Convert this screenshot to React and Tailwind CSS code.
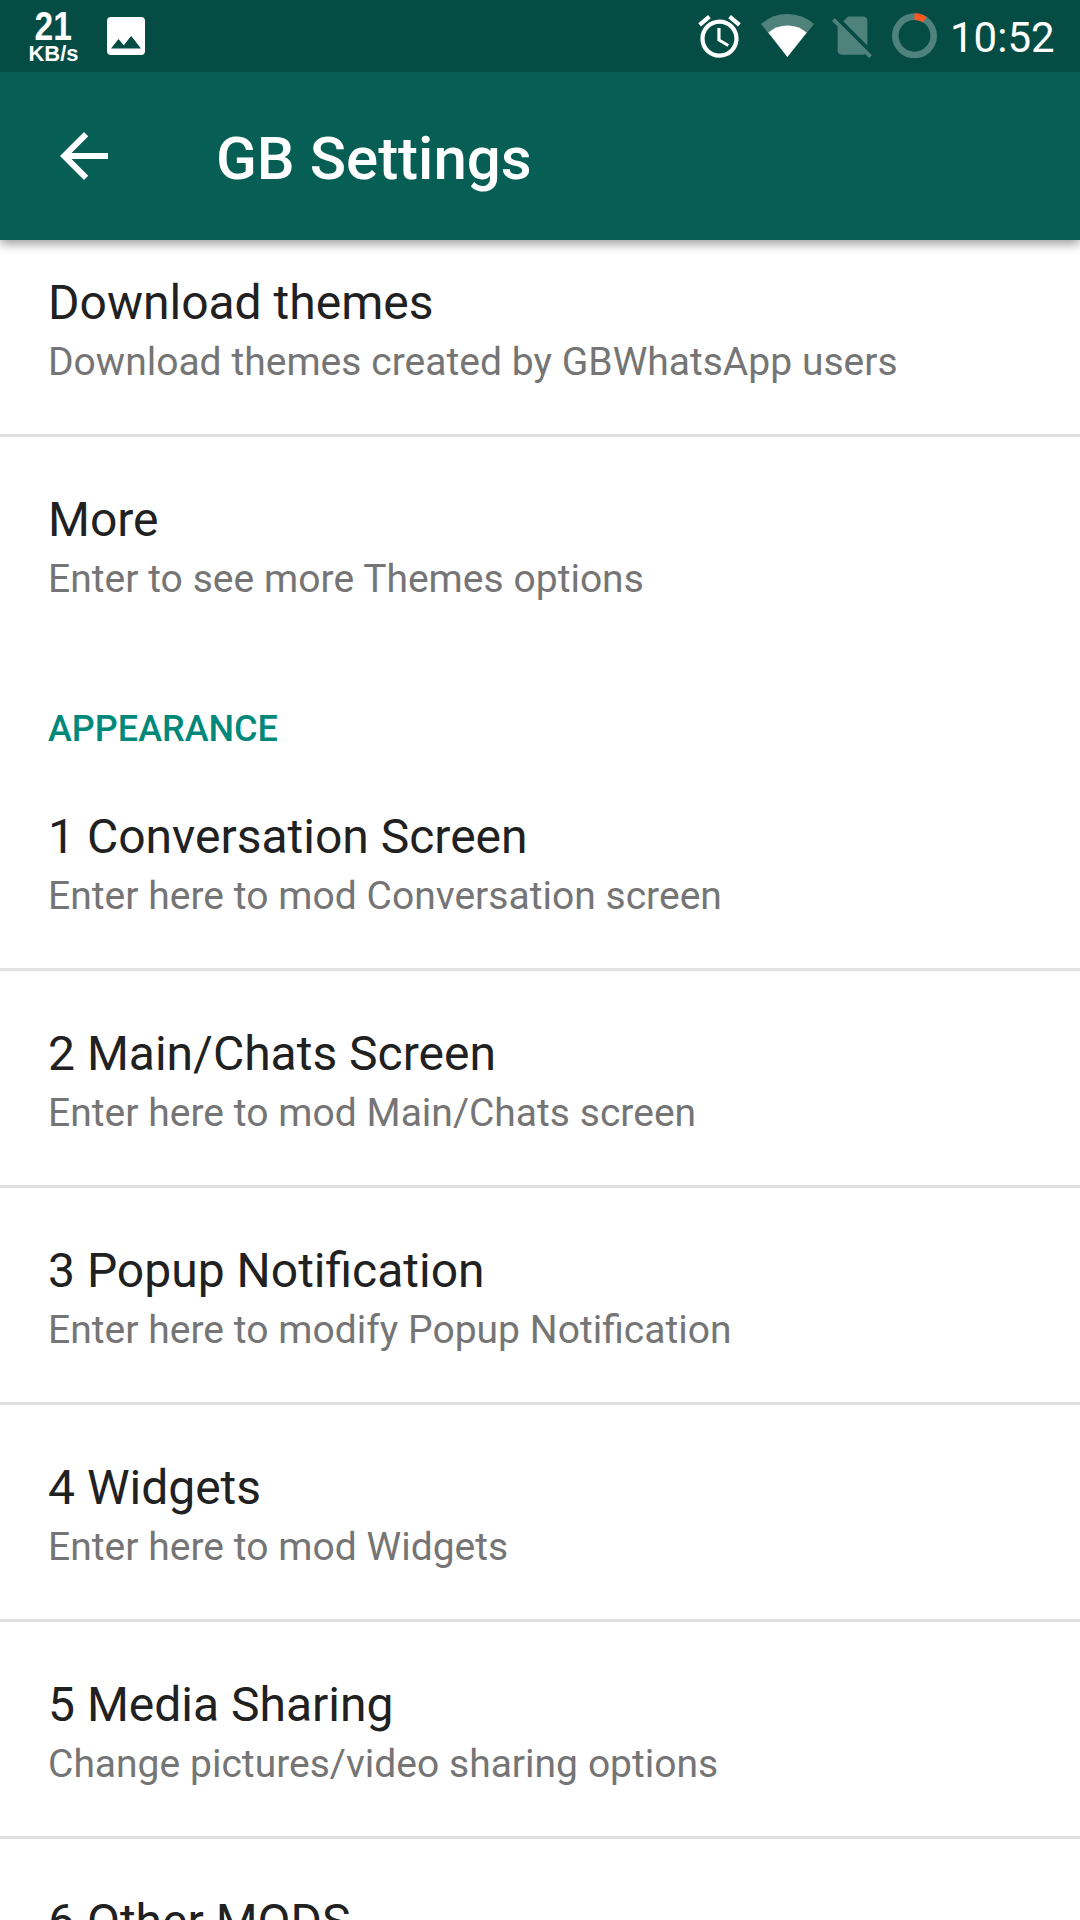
const themes = [
  { title: "Download themes", summary: "Download themes created by GBWhatsApp users" },
  { title: "More", summary: "Enter to see more Themes options" },
];

const appearance = [
  { title: "1 Conversation Screen", summary: "Enter here to mod Conversation screen" },
  { title: "2 Main/Chats Screen", summary: "Enter here to mod Main/Chats screen" },
  { title: "3 Popup Notification", summary: "Enter here to modify Popup Notification" },
  { title: "4 Widgets", summary: "Enter here to mod Widgets" },
  { title: "5 Media Sharing", summary: "Change pictures/video sharing options" },
  { title: "6 Other MODS" },
];

function PhotoIcon() {
  return (
    <svg className="h-[38px] w-[38px]" viewBox="0 0 38 38">
      <path
        fill="#fff"
        fillRule="evenodd"
        d="M4 0h30a4 4 0 0 1 4 4v30a4 4 0 0 1-4 4H4a4 4 0 0 1-4-4V4a4 4 0 0 1 4-4zM4 31.5h30L24.2 19l-7.5 9.3-5.2-6.3z"
      />
    </svg>
  );
}

function AlarmIcon() {
  return (
    <svg className="h-[51px] w-[51px]" viewBox="0 0 24 24" fill="#fff">
      <path d="M22 5.72l-4.6-3.86-1.29 1.53 4.6 3.86L22 5.72zM7.88 3.39L6.6 1.86 2 5.71l1.29 1.53 4.59-3.85zM12.5 8H11v6l4.75 2.85.75-1.23-4-2.37V8zM12 4c-4.97 0-9 4.03-9 9s4.02 9 9 9a9 9 0 0 0 0-18zm0 16c-3.87 0-7-3.13-7-7s3.13-7 7-7 7 3.13 7 7-3.13 7-7 7z" />
    </svg>
  );
}

function WifiIcon() {
  return (
    <svg className="h-[43px] w-[53px]" viewBox="0 0 53 43" fill="#fff">
      <path fillOpacity=".3" d="M26.4 43L0 10Q11.5 0 26.5 0T53 10z" />
      <path d="M26.4 43L7.3 18.5Q15.5 11.5 26.5 11.5T45.7 18.5z" />
    </svg>
  );
}

function NoSimIcon() {
  return (
    <svg className="h-[51px] w-[51px]" viewBox="0 0 24 24" fill="#fff" fillOpacity=".3">
      <path d="M18.99 5c0-1.1-.89-2-1.99-2h-7L7.66 5.34 19 16.68 18.99 5zM3.65 3.88L2.38 5.15 5 7.77V19c0 1.1.9 2 2 2h10.01c.35 0 .67-.1.96-.26l1.88 1.88 1.27-1.27L3.65 3.88z" />
    </svg>
  );
}

function BatteryRing() {
  return (
    <svg className="h-[45px] w-[45px]" viewBox="0 0 45 45" fill="none" strokeWidth="6.6">
      <circle cx="22.5" cy="22.8" r="19.2" stroke="#50827c" />
      <circle
        cx="22.5"
        cy="22.8"
        r="19.2"
        stroke="#ff5722"
        pathLength="100"
        strokeDasharray="9 91"
        transform="rotate(-90 22.5 22.8)"
      />
    </svg>
  );
}

function StatusBar() {
  return (
    <div className="flex h-[72px] items-start bg-[#054d44] text-white">
      <div className="ml-[24px] flex w-[60px] flex-col items-center pt-[7px] font-['Liberation_Sans',sans-serif] font-bold">
        <span className="-ml-[2px] scale-x-[0.84] text-[40px] leading-[38px]">21</span>
        <span className="-mt-[1px] scale-x-[0.98] text-[22.4px] leading-[20px]">KB/s</span>
      </div>
      <div className="ml-[23px] pt-[17px]">
        <PhotoIcon />
      </div>
      <div className="ml-auto flex items-start">
        <div className="pt-[11px]">
          <AlarmIcon />
        </div>
        <div className="ml-[16px] pt-[14px]">
          <WifiIcon />
        </div>
        <div className="ml-[13px] pt-[10px]">
          <NoSimIcon />
        </div>
        <div className="ml-[14px] pt-[13px]">
          <BatteryRing />
        </div>
        <span className="mr-[23px] ml-[13px] w-[107px] pt-[13px] text-[42px] leading-[50px] whitespace-nowrap">10:52</span>
      </div>
    </div>
  );
}

function AppBar() {
  return (
    <div className="flex h-[168px] items-center bg-[#075e54] pl-[48px] text-white">
      <svg className="h-[72px] w-[72px]" viewBox="0 0 24 24" fill="#fff">
        <path d="M20 11H7.83l5.59-5.59L12 4l-8 8 8 8 1.41-1.41L7.83 13H20v-2z" />
      </svg>
      <h1 className="ml-[96px] pt-[5px] text-[60px] leading-[70px] font-medium">GB Settings</h1>
    </div>
  );
}

function Row({ title, summary, divided }) {
  return (
    <li className={divided ? "border-b-3 border-[#e0e0e0]" : ""}>
      <div className="h-[214px] px-[48px] pt-[55px]">
        <div className="text-[48px] leading-[56px] text-[#212121]">{title}</div>
        {summary && (
          <div className="mt-[8px] text-[39px] leading-[46px] text-[#757575] [word-spacing:0.2px]">{summary}</div>
        )}
      </div>
    </li>
  );
}

function Rows({ items }) {
  return (
    <ul>
      {items.map((item, i) => (
        <Row key={item.title} {...item} divided={i < items.length - 1} />
      ))}
    </ul>
  );
}

export default function App() {
  return (
    <div className="flex h-[1920px] w-[1080px] flex-col overflow-hidden bg-white font-[Roboto,sans-serif]">
      <header className="z-10 shrink-0 shadow-[0_4px_10px_rgba(0,0,0,0.38)]">
        <StatusBar />
        <AppBar />
      </header>
      <main className="-mt-[20px] min-h-0 flex-1 overflow-hidden">
        <Rows items={themes} />
        <h2 className="h-[103px] px-[48px] pt-[57px] text-[36px] leading-[42px] font-medium text-[#00897b]">APPEARANCE</h2>
        <Rows items={appearance} />
      </main>
    </div>
  );
}
